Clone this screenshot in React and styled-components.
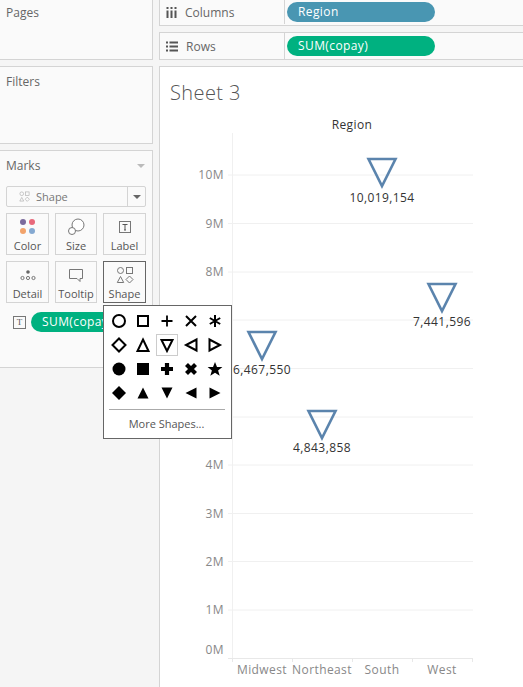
import styled, { createGlobalStyle } from "styled-components";

const GRID_LINES = [
  { label: "10M", y: 175 },
  { label: "9M", y: 223.5 },
  { label: "8M", y: 272 },
  { label: "7M", y: 320 },
  { label: "6M", y: 368.5 },
  { label: "5M", y: 417 },
  { label: "4M", y: 465 },
  { label: "3M", y: 513.5 },
  { label: "2M", y: 561.5 },
  { label: "1M", y: 610 },
];

const REGIONS = [
  { name: "Midwest", x: 262, markY: 332, value: "6,467,550", valueY: 374 },
  { name: "Northeast", x: 322, markY: 411, value: "4,843,858", valueY: 452 },
  { name: "South", x: 382, markY: 159, value: "10,019,154", valueY: 202 },
  { name: "West", x: 442, markY: 284, value: "7,441,596", valueY: 326 },
];

const SHAPES = [
  <circle cx="8" cy="8" r="6" fill="none" stroke="#000" strokeWidth="2" />,
  <rect x="3" y="3" width="10" height="10" fill="none" stroke="#000" strokeWidth="2" />,
  <path d="M8 2.5v11M2.5 8h11" stroke="#000" strokeWidth="1.8" />,
  <path d="M3 3l10 10M13 3L3 13" stroke="#000" strokeWidth="2" />,
  <path d="M8 2v12M2.8 5l10.4 6M13.2 5L2.8 11" stroke="#000" strokeWidth="2" />,
  <path d="M8 1.5L14.5 8 8 14.5 1.5 8z" fill="none" stroke="#000" strokeWidth="2" />,
  <path d="M8 2.5L13.5 14h-11z" fill="none" stroke="#000" strokeWidth="2" />,
  <path d="M2.5 3h11L8 14z" fill="none" stroke="#000" strokeWidth="2" />,
  <path d="M13.5 2.5v11L3 8z" fill="none" stroke="#000" strokeWidth="2" />,
  <path d="M2.5 2.5v11L13 8z" fill="none" stroke="#000" strokeWidth="2" />,
  <circle cx="8" cy="8" r="6.5" fill="#000" />,
  <rect x="2" y="2" width="12" height="12" fill="#000" />,
  <path d="M8 2v12M2 8h12" stroke="#000" strokeWidth="4.2" />,
  <path d="M3.5 3.5l9 9M12.5 3.5l-9 9" stroke="#000" strokeWidth="4.2" />,
  <path d="M8 1l2 5h5.4l-4.3 3.4 1.6 5.4L8 11.7l-4.7 3.1 1.6-5.4L.6 6H6z" fill="#000" />,
  <path d="M8 1L15 8 8 15 1 8z" fill="#000" />,
  <path d="M8 2.5l5.5 11h-11z" fill="#000" />,
  <path d="M2.5 2.5h11L8 13.5z" fill="#000" />,
  <path d="M13.5 2.5v11L2.5 8z" fill="#000" />,
  <path d="M2.5 2.5v11L13.5 8z" fill="#000" />,
];

const GlobalStyle = createGlobalStyle`
  html, body {
    margin: 0;
    padding: 0;
    background: #f5f5f5;
  }
  body {
    font-family: "Open Sans", "Noto Sans", sans-serif;
    color: #555;
  }
`;

const Page = styled.div`
  position: relative;
  width: 523px;
  height: 687px;
  overflow: hidden;
  display: grid;
  grid-template-columns: 153px 1fr;
  column-gap: 6px;
`;

const LeftColumn = styled.div`
  display: flex;
  flex-direction: column;
  gap: 6px;
`;

const Panel = styled.section`
  background: #fafafa;
  height: ${(p) => p.$height}px;
  box-sizing: border-box;
  border-right: 1px solid #d4d4d4;
  border-bottom: 1px solid #d4d4d4;
  border-top: ${(p) => (p.$noTop ? "none" : "1px solid #d4d4d4")};
  padding: ${(p) => (p.$noTop ? "5px" : "7px")} 6px 0;
`;

const PanelTitle = styled.div`
  font-size: 12px;
  line-height: 16px;
  color: #666;
`;

const MarksHeader = styled.div`
  display: flex;
  justify-content: space-between;
  align-items: center;
  padding-right: 1px;
`;

const Caret = styled.span`
  width: 0;
  height: 0;
  border-left: 4px solid transparent;
  border-right: 4px solid transparent;
  border-top: ${(p) => (p.$dark ? "4px solid #666" : "4px solid #bbb")};
`;

const MarkSelect = styled.div`
  margin-top: 12px;
  height: 21px;
  box-sizing: border-box;
  border: 1px solid #d4d4d4;
  border-radius: 2px;
  display: grid;
  grid-template-columns: 1fr 18px;
  align-items: center;
  font-size: 11px;
  color: #777;
`;

const SelectLabel = styled.div`
  display: flex;
  align-items: center;
  gap: 6px;
  padding-left: 12px;
  height: 100%;
`;

const SelectIcon = styled.svg`
  width: 11px;
  height: 11px;
  flex: none;
`;

const SelectArrow = styled.div`
  height: 100%;
  border-left: 1px solid #d4d4d4;
  display: flex;
  align-items: center;
  justify-content: center;
`;

const CardGrid = styled.div`
  margin-top: 6px;
  display: grid;
  grid-template-columns: 43px 42px 43px;
  grid-auto-rows: 42px;
  column-gap: 6px;
  row-gap: 6px;
`;

const Card = styled.div`
  box-sizing: border-box;
  border: 1px solid ${(p) => (p.$active ? "#666" : "#d4d4d4")};
  display: flex;
  flex-direction: column;
  align-items: center;
  font-size: 11px;
  line-height: 14px;
  color: #555;
`;

const CardIcon = styled.svg`
  width: 18px;
  height: 18px;
  margin-top: 4px;
  margin-bottom: 3px;
  flex: none;
`;

const PillRow = styled.div`
  margin-top: 9px;
  display: flex;
  align-items: center;
  gap: 5px;
  padding-left: 7px;
`;

const TextBadge = styled.span`
  width: 11px;
  height: 11px;
  border: 1px solid #777;
  font-family: "Liberation Serif", serif;
  font-size: 9px;
  line-height: 11px;
  text-align: center;
  color: #555;
  flex: none;
`;

const Pill = styled.div`
  width: ${(p) => p.$width}px;
  height: 20px;
  border-radius: 10px;
  background: ${(p) => p.$color};
  color: #fff;
  font-size: 12px;
  letter-spacing: 0.4px;
  line-height: 20px;
  padding-left: 11px;
  box-sizing: border-box;
  flex: none;
`;

const RightColumn = styled.div`
  display: flex;
  flex-direction: column;
  min-width: 0;
`;

const Shelf = styled.div`
  height: ${(p) => p.$height}px;
  box-sizing: border-box;
  margin-bottom: ${(p) => p.$gap}px;
  padding-bottom: ${(p) => (p.$top ? 0 : 1)}px;
  background: #fafafa;
  border-left: 1px solid #d4d4d4;
  border-bottom: 1px solid #d4d4d4;
  border-top: ${(p) => (p.$top ? "1px solid #d4d4d4" : "none")};
  display: grid;
  grid-template-columns: 125px 1fr;
  align-items: center;
`;

const ShelfLabel = styled.div`
  height: 100%;
  display: flex;
  align-items: center;
  gap: 8px;
  padding-left: 6px;
  font-size: 12px;
  color: #666;
  border-right: 1px solid #d4d4d4;
`;

const ShelfBody = styled.div`
  padding-left: 2px;
`;

const Sheet = styled.main`
  flex: 1;
  background: #fff;
  border-left: 1px solid #d4d4d4;
  border-top: 1px solid #d4d4d4;
  position: relative;
`;

const SheetTitle = styled.h1`
  margin: 0;
  padding: 12px 0 0 10px;
  font-size: 20px;
  line-height: 27px;
  font-weight: 300;
  color: #555;
  letter-spacing: 0.4px;
`;

const ChartSvg = styled.svg`
  position: absolute;
  left: -160px;
  top: -67px;
  width: 523px;
  height: 687px;
  display: block;

  text {
    font-family: "Open Sans", "Noto Sans", sans-serif;
    font-size: 12px;
    letter-spacing: 0.4px;
  }
`;

const ShapesPopup = styled.div`
  position: absolute;
  left: 103px;
  top: 305px;
  width: 129px;
  height: 134px;
  box-sizing: border-box;
  border: 1px solid #666;
  background: #fff;
  padding: 3px 4px 0;
`;

const ShapeGrid = styled.div`
  display: grid;
  grid-template-columns: repeat(5, 24px);
  grid-auto-rows: 24px;
  margin-left: -1px;
`;

const ShapeCell = styled.div`
  display: flex;
  align-items: center;
  justify-content: center;
  box-sizing: border-box;
  ${(p) => p.$selected && "outline: 1px solid #ccc; outline-offset: -2px;"}

  svg {
    width: 16px;
    height: 16px;
  }
`;

const PopupDivider = styled.div`
  height: 1px;
  background: #aaa;
  margin: 4px 2px 0 1px;
`;

const MoreShapes = styled.div`
  text-align: center;
  font-size: 11px;
  line-height: 14px;
  margin-top: 7px;
  padding-right: 2px;
  color: #555;
`;

const ColorIcon = () => (
  <CardIcon viewBox="0 0 18 18">
    <circle cx="4" cy="4" r="3" fill="#7b6a9c" />
    <circle cx="13" cy="4" r="3" fill="#e8697b" />
    <circle cx="4" cy="13" r="3" fill="#f2a36b" />
    <circle cx="13" cy="13" r="3" fill="#85a9d1" />
  </CardIcon>
);

const SizeIcon = () => (
  <CardIcon viewBox="0 0 18 18">
    <circle cx="11" cy="7" r="6" fill="#fff" stroke="#777" />
    <circle cx="5" cy="13" r="3.5" fill="#fff" stroke="#777" />
  </CardIcon>
);

const LabelIcon = () => (
  <CardIcon viewBox="0 0 18 18">
    <rect x="3.5" y="3.5" width="11" height="11" fill="none" stroke="#777" />
    <path d="M6.5 6.5h5M9 6.5v5.5M8 12h2" fill="none" stroke="#555" />
  </CardIcon>
);

const DetailIcon = () => (
  <CardIcon viewBox="0 0 18 18">
    <circle cx="9" cy="6" r="1.8" fill="#666" />
    <circle cx="3.5" cy="12" r="1.6" fill="none" stroke="#777" />
    <circle cx="9" cy="12" r="1.6" fill="none" stroke="#777" />
    <circle cx="14.5" cy="12" r="1.6" fill="none" stroke="#777" />
  </CardIcon>
);

const TooltipIcon = () => (
  <CardIcon viewBox="0 0 18 18">
    <path d="M2.5 3.5h13v9h-2.5v3l-3-3h-7.5z" fill="none" stroke="#777" />
  </CardIcon>
);

const ShapeGlyphs = ({ stroke }) => (
  <g fill="none" stroke={stroke}>
    <circle cx="4.5" cy="4.5" r="3" />
    <rect x="10.5" y="1.5" width="6" height="6" />
    <path d="M4.5 10.5l3.2 6H1.3z" />
    <path d="M13.5 10l3.5 3.5-3.5 3.5-3.5-3.5z" />
  </g>
);

const ShapeIcon = () => (
  <CardIcon viewBox="0 0 18 18">
    <ShapeGlyphs stroke="#777" />
  </CardIcon>
);

const ColumnsIcon = () => (
  <svg width="11" height="11" viewBox="0 0 11 11">
    <path d="M1.5 0v2M5.5 0v2M9.5 0v2M1.5 3.5V11M5.5 3.5V11M9.5 3.5V11" stroke="#555" strokeWidth="2" />
  </svg>
);

const RowsIcon = () => (
  <svg width="12" height="11" viewBox="0 0 12 11">
    <path d="M0 1.5h2M3.5 1.5H12M0 5.5h2M3.5 5.5H12M0 9.5h2M3.5 9.5H12" stroke="#555" strokeWidth="2" />
  </svg>
);

const CARDS = [
  { label: "Color", Icon: ColorIcon },
  { label: "Size", Icon: SizeIcon },
  { label: "Label", Icon: LabelIcon },
  { label: "Detail", Icon: DetailIcon },
  { label: "Tooltip", Icon: TooltipIcon },
  { label: "Shape", Icon: ShapeIcon, active: true },
];

const App = () => {
  return (
    <Page>
      <GlobalStyle />
      <LeftColumn>
        <Panel $height={60} $noTop>
          <PanelTitle>Pages</PanelTitle>
        </Panel>
        <Panel $height={78}>
          <PanelTitle>Filters</PanelTitle>
        </Panel>
        <Panel $height={218}>
          <MarksHeader>
            <PanelTitle>Marks</PanelTitle>
            <Caret />
          </MarksHeader>
          <MarkSelect>
            <SelectLabel>
              <SelectIcon viewBox="0 0 18 18">
                <ShapeGlyphs stroke="#aaa" />
              </SelectIcon>
              Shape
            </SelectLabel>
            <SelectArrow>
              <Caret $dark />
            </SelectArrow>
          </MarkSelect>
          <CardGrid>
            {CARDS.map(({ label, Icon, active }) => (
              <Card key={label} $active={active}>
                <Icon />
                {label}
              </Card>
            ))}
          </CardGrid>
          <PillRow>
            <TextBadge>T</TextBadge>
            <Pill $width={100} $color="#00b180">
              SUM(copay)
            </Pill>
          </PillRow>
        </Panel>
      </LeftColumn>

      <RightColumn>
        <Shelf $height={26} $gap={6}>
          <ShelfLabel>
            <ColumnsIcon />
            Columns
          </ShelfLabel>
          <ShelfBody>
            <Pill $width={148} $color="#4996b2">
              Region
            </Pill>
          </ShelfBody>
        </Shelf>
        <Shelf $height={28} $gap={6} $top>
          <ShelfLabel>
            <RowsIcon />
            Rows
          </ShelfLabel>
          <ShelfBody>
            <Pill $width={148} $color="#00b180">
              SUM(copay)
            </Pill>
          </ShelfBody>
        </Shelf>
        <Sheet>
          <SheetTitle>Sheet 3</SheetTitle>
          <ChartSvg viewBox="0 0 523 687">
            <text x="352" y="129" textAnchor="middle" fill="#333" style={{ fontSize: 12 }}>
              Region
            </text>
            <line x1="232.5" y1="133" x2="232.5" y2="662" stroke="#f0f0f0" />
            {GRID_LINES.map((g) => (
              <g key={g.label}>
                <line x1="228" y1={g.y} x2="473" y2={g.y} stroke="#f0f0f0" />
                <text x="224" y={g.y + 4} textAnchor="end" fill="#888">
                  {g.label}
                </text>
              </g>
            ))}
            <text x="224" y="654" textAnchor="end" fill="#888">
              0M
            </text>
            <line x1="228" y1="658.5" x2="473" y2="658.5" stroke="#e8e8e8" />
            {[232.5, 292.5, 352.5, 412.5, 472.5].map((x) => (
              <line key={x} x1={x} y1="658" x2={x} y2="662" stroke="#e8e8e8" />
            ))}
            {REGIONS.map((r) => (
              <g key={r.name}>
                <path
                  d={`M${r.x - 13.5} ${r.markY}h27L${r.x} ${r.markY + 27}z`}
                  fill="none"
                  stroke="#5b84ad"
                  strokeWidth="2.6"
                />
                <text x={r.x} y={r.valueY} textAnchor="middle" fill="#333">
                  {r.value}
                </text>
                <text x={r.x} y="674" textAnchor="middle" fill="#888">
                  {r.name}
                </text>
              </g>
            ))}
          </ChartSvg>
        </Sheet>
      </RightColumn>

      <ShapesPopup>
        <ShapeGrid>
          {SHAPES.map((shape, i) => (
            <ShapeCell key={i} $selected={i === 7}>
              <svg viewBox="0 0 16 16">{shape}</svg>
            </ShapeCell>
          ))}
        </ShapeGrid>
        <PopupDivider />
        <MoreShapes>More Shapes...</MoreShapes>
      </ShapesPopup>
    </Page>
  );
};

export default App;
